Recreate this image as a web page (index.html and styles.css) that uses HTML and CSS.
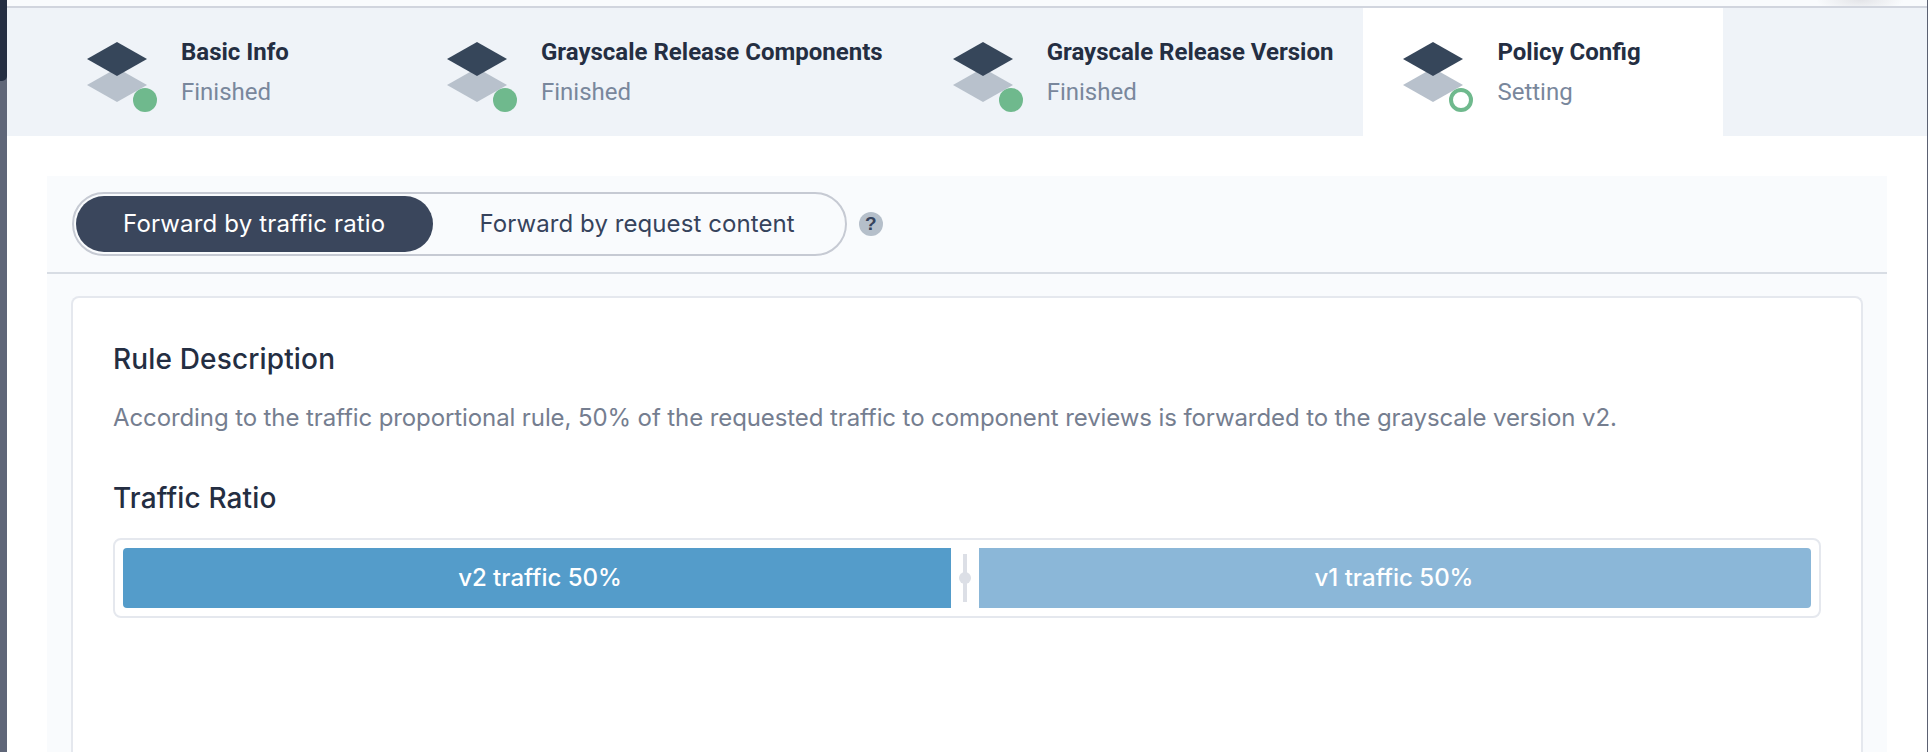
FILE: index.html
```html
<!DOCTYPE html>
<html lang="en">
<head>
<meta charset="utf-8">
<title>Policy Config</title>
<link rel="stylesheet" href="styles.css">
</head>
<body>
<div class="app">
  <aside class="rail"><div class="rail-top"></div></aside>
  <main class="main">
    <div class="top-strip"></div>
    <nav class="steps">
      <div class="step">
        <svg class="step-icon" viewBox="0 0 70 70" aria-hidden="true"><polygon class="d-light" points="0,43 30,26 60,43 30,60"/><polygon class="d-dark" points="0,17 30,0 60,17 30,34"/><circle class="dot" cx="58" cy="58" r="12"/></svg>
        <div class="step-text"><div class="step-title">Basic Info</div><div class="step-sub">Finished</div></div>
      </div>
      <div class="step">
        <svg class="step-icon" viewBox="0 0 70 70" aria-hidden="true"><polygon class="d-light" points="0,43 30,26 60,43 30,60"/><polygon class="d-dark" points="0,17 30,0 60,17 30,34"/><circle class="dot" cx="58" cy="58" r="12"/></svg>
        <div class="step-text"><div class="step-title">Grayscale Release Components</div><div class="step-sub">Finished</div></div>
      </div>
      <div class="step">
        <svg class="step-icon" viewBox="0 0 70 70" aria-hidden="true"><polygon class="d-light" points="0,43 30,26 60,43 30,60"/><polygon class="d-dark" points="0,17 30,0 60,17 30,34"/><circle class="dot" cx="58" cy="58" r="12"/></svg>
        <div class="step-text"><div class="step-title">Grayscale Release Version</div><div class="step-sub">Finished</div></div>
      </div>
      <div class="step step-active">
        <svg class="step-icon" viewBox="0 0 70 70" aria-hidden="true"><polygon class="d-light" points="0,43 30,26 60,43 30,60"/><polygon class="d-dark" points="0,17 30,0 60,17 30,34"/><circle class="ring" cx="58" cy="58" r="10"/></svg>
        <div class="step-text"><div class="step-title">Policy Config</div><div class="step-sub">Setting</div></div>
      </div>
    </nav>
    <section class="panel">
      <div class="panel-head">
        <div class="switch">
          <div class="switch-item switch-on">Forward by traffic ratio</div>
          <div class="switch-item">Forward by request content</div>
        </div>
        <span class="help">?</span>
      </div>
      <div class="card">
        <h3 class="card-title">Rule Description</h3>
        <p class="card-desc">According to the traffic proportional rule, 50% of the requested traffic to component reviews is forwarded to the grayscale version v2.</p>
        <h3 class="card-title ratio-title">Traffic Ratio</h3>
        <div class="ratio">
          <div class="seg seg-a">v2 traffic 50%</div>
          <div class="handle"><span class="handle-dot"></span></div>
          <div class="seg seg-b">v1 traffic 50%</div>
        </div>
      </div>
    </section>
  </main>
</div>
</body>
</html>
```
FILE: styles.css
```css
* { box-sizing: border-box; }
html, body { margin: 0; height: 100%; overflow: hidden; background: #fff; }
body { font-family: Inter, "Liberation Sans", sans-serif; color: #242e42; }
.app { display: flex; height: 752px; border-right: 1px solid #5b6172; }
.rail { width: 7px; flex: none; background: #5f6678; }
.rail-top { height: 81px; background: #242e42; border-bottom-right-radius: 5px; }
.main { flex: 1; min-width: 0; display: flex; flex-direction: column; }
.top-strip { height: 8px; flex: none; background: #f9fbfd; border-bottom: 2px solid #d1d5de; background-image: radial-gradient(ellipse 44px 12px at 1853px 0, #e3e4e8, rgba(227,228,232,0)); }
.steps { height: 128px; flex: none; display: flex; padding-left: 40px; background: #eff3f8; }
.step { min-width: 360px; display: flex; padding: 34px 30px 0 40px; }
.step-active { background: #fff; }
.step-icon { width: 70px; height: 70px; margin-right: 24px; flex: none; }
.d-dark { fill: #36465a; }
.d-light { fill: #b8c1cc; }
.dot { fill: #6fb98d; }
.ring { fill: #fff; stroke: #6fb98d; stroke-width: 4; }
.step-text { font-family: Roboto, sans-serif; }
.step-title { font-size: 24px; font-weight: 700; line-height: 28px; margin-top: -4px; color: #242e42; white-space: nowrap; }
.step-sub { font-size: 24px; line-height: 28px; margin-top: 12px; color: #79879c; white-space: nowrap; }
.panel { flex: 1; margin: 40px 40px 0 40px; background: #f9fbfd; display: flex; flex-direction: column; min-height: 0; }
.panel-head { height: 98px; flex: none; padding: 16px 0 0 25px; display: flex; align-items: flex-start; gap: 12px; border-bottom: 2px solid #d8dde4; }
.switch { height: 64px; display: flex; padding: 2px; border: 2px solid #c6cad3; border-radius: 32px; }
.switch-item { height: 56px; padding: 0 48px 2px 46px; display: flex; align-items: center; font-size: 24px; letter-spacing: .08px; color: #36435c; border-radius: 28px; white-space: nowrap; }
.switch-on { padding: 0 48px 2px 47px; letter-spacing: .16px; background: #3a465c; color: #fff; }
.help { width: 24px; height: 24px; margin-top: 20px; border-radius: 50%; background: #b5bfca; color: #36435c; font: 700 19px/24px "Liberation Sans", sans-serif; text-align: center; }
.card { flex: 1; margin: 22px 24px 0 24px; padding: 43px 42px 0 41px; background: #fff; border: 2px solid #e5e8ee; border-bottom: 0; border-radius: 8px 8px 0 0; min-height: 0; }
.card-title { margin: 0 0 0 -1px; font-size: 28px; letter-spacing: .15px; line-height: 36px; font-weight: 500; color: #242e42; }
.card-desc { margin: 25px 0 0 -1px; font-size: 24px; letter-spacing: -.1px; line-height: 32px; color: #757e90; white-space: nowrap; }
.ratio-title { margin-top: 46px; }
.ratio { margin: 22px -2px 0 -1px; height: 80px; padding: 8px; display: flex; background: #fff; border: 2px solid #e5e8ee; border-radius: 8px; }
.seg { display: flex; align-items: center; justify-content: center; padding-bottom: 2px; font-size: 24px; font-weight: 500; color: #fff; }
.seg-a { flex: 823; padding-left: 6px; background: #549cca; border-radius: 4px 0 0 4px; }
.seg-b { flex: 831; padding-right: 2px; background: #8bb7d8; border-radius: 0 4px 4px 0; }
.handle { width: 28px; flex: none; position: relative; display: flex; justify-content: center; }
.handle::before { content: ""; width: 4px; margin: 6px 0; background: #dcdfe6; }
.handle-dot { position: absolute; left: 8px; top: 24px; width: 12px; height: 12px; border-radius: 50%; background: #dcdfe6; }
```
